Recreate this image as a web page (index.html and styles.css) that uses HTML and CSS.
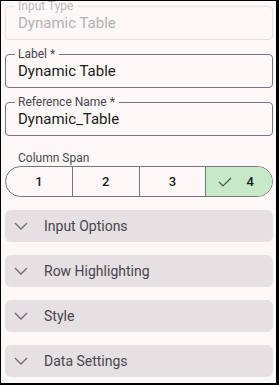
FILE: index.html
```html
<!DOCTYPE html>
<html>
<head>
<meta charset="utf-8">
<link rel="stylesheet" href="styles.css">
</head>
<body>
<div class="frame">
  <div class="panel">
    <div class="field disabled">
      <span class="flabel">Input Type</span>
      <span class="fvalue">Dynamic Table</span>
    </div>
    <div class="field">
      <span class="flabel">Label *</span>
      <span class="fvalue">Dynamic Table</span>
    </div>
    <div class="field">
      <span class="flabel">Reference Name *</span>
      <span class="fvalue">Dynamic_Table</span>
    </div>
    <div class="span-group">
      <div class="span-label">Column Span</div>
      <div class="segmented">
        <div class="seg">1</div>
        <div class="seg">2</div>
        <div class="seg">3</div>
        <div class="seg selected">
          <svg class="check" width="14" height="10" viewBox="0 0 14 10"><path d="M1 5 L5 9 L13 1" fill="none" stroke="#4b554b" stroke-width="1.2"/></svg>
          <span>4</span>
        </div>
      </div>
    </div>
    <div class="accordions">
      <div class="acc">
        <svg class="chev" width="14" height="8" viewBox="0 0 14 8"><path d="M1 1 L7 7 L13 1" fill="none" stroke="#6f6a72" stroke-width="1.3"/></svg>
        <span>Input Options</span>
      </div>
      <div class="acc">
        <svg class="chev" width="14" height="8" viewBox="0 0 14 8"><path d="M1 1 L7 7 L13 1" fill="none" stroke="#6f6a72" stroke-width="1.3"/></svg>
        <span>Row Highlighting</span>
      </div>
      <div class="acc">
        <svg class="chev" width="14" height="8" viewBox="0 0 14 8"><path d="M1 1 L7 7 L13 1" fill="none" stroke="#6f6a72" stroke-width="1.3"/></svg>
        <span>Style</span>
      </div>
      <div class="acc">
        <svg class="chev" width="14" height="8" viewBox="0 0 14 8"><path d="M1 1 L7 7 L13 1" fill="none" stroke="#6f6a72" stroke-width="1.3"/></svg>
        <span>Data Settings</span>
      </div>
    </div>
  </div>
</div>
</body>
</html>
```
FILE: styles.css
```css
html, body {
  margin: 0;
  padding: 0;
  background: #000;
}
body {
  width: 279px;
  height: 385px;
  overflow: hidden;
  font-family: Roboto, "Noto Sans", sans-serif;
}
.frame {
  padding: 1px 3px 2px 1px;
  height: 385px;
  box-sizing: border-box;
}
.panel {
  background: #fdf8f8;
  height: 100%;
  box-sizing: border-box;
  padding: 5px 3px 0 4px;
  display: flex;
  flex-direction: column;
  overflow: hidden;
}
.field {
  position: relative;
  height: 34px;
  flex: none;
  box-sizing: border-box;
  border: 1px solid #79747e;
  border-radius: 4px;
  display: flex;
  align-items: center;
  padding-left: 12px;
  margin-bottom: 14px;
}
.field.disabled {
  border-color: #e5dfe0;
}
.flabel {
  position: absolute;
  left: 9px;
  top: -7px;
  padding: 0 4px 0 3px;
  background: #fdf8f8;
  font-size: 12px;
  line-height: 13px;
  color: #4a4550;
}
.disabled .flabel {
  color: #bdb8b9;
}
.fvalue {
  font-size: 15px;
  color: #1d1b20;
}
.disabled .fvalue {
  color: #b6b1b2;
}
.span-group {
  margin-top: 1px;
}
.span-label {
  font-size: 12px;
  line-height: 14px;
  color: #4a4550;
  padding-left: 13px;
  margin-bottom: 1px;
}
.segmented {
  display: flex;
  height: 31px;
  box-sizing: border-box;
  border: 1px solid #79747e;
  border-radius: 16px;
  overflow: hidden;
}
.seg {
  flex: 1;
  display: flex;
  align-items: center;
  justify-content: center;
  gap: 14px;
  font-size: 13px;
  font-weight: 500;
  color: #1d1b20;
  border-left: 1px solid #79747e;
}
.seg:first-child {
  border-left: none;
}
.seg.selected {
  background: #c6e9c8;
}
.check {
  margin-left: -6px;
}
.accordions {
  margin-top: 13px;
  display: flex;
  flex-direction: column;
  gap: 13px;
}
.acc {
  height: 32px;
  flex: none;
  background: #e5e0e1;
  border-radius: 6px;
  display: flex;
  align-items: center;
  padding-left: 9px;
  gap: 16px;
  font-size: 14px;
  color: #4a4550;
}
.chev {
  flex: none;
}
```
